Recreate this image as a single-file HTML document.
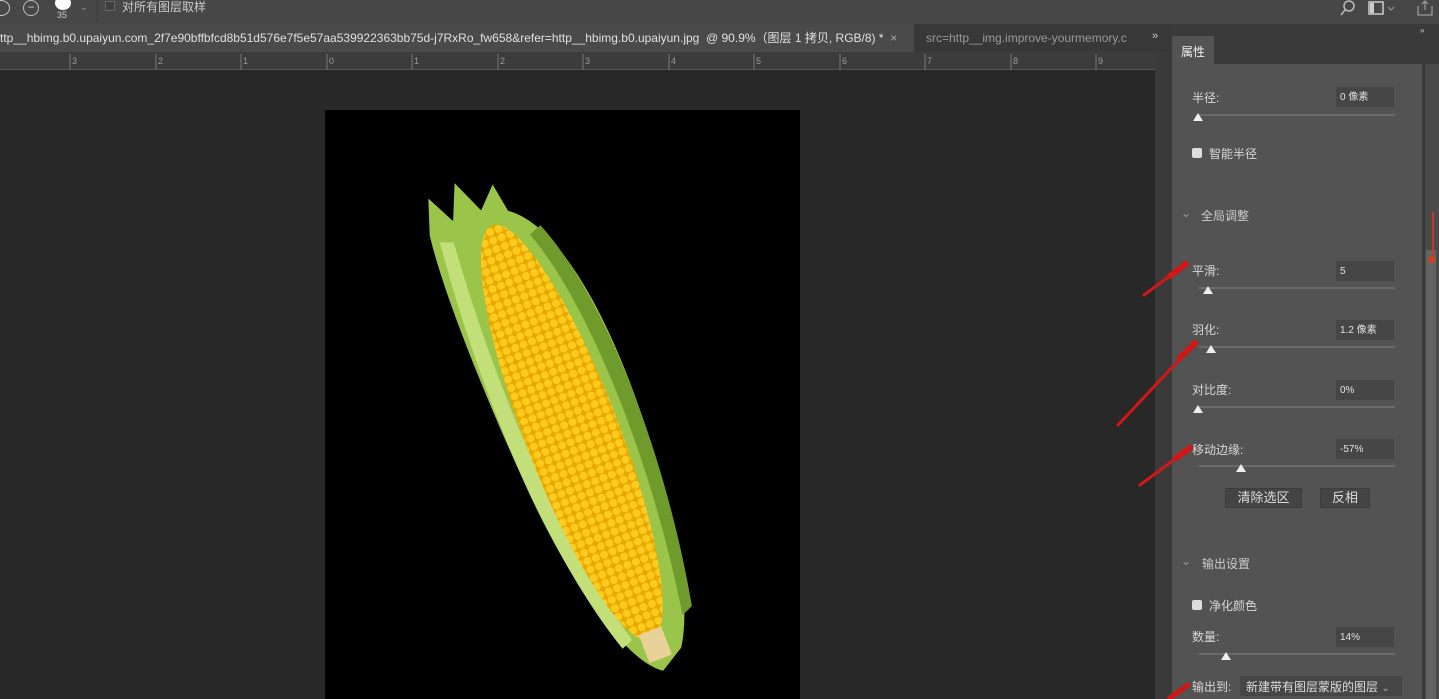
<!DOCTYPE html>
<html style="overflow:hidden;width:1439px;height:699px"><head><meta charset="utf-8"><style>
*{margin:0;padding:0;box-sizing:border-box}
body{width:1439px;height:699px;overflow:hidden;background:#282828;font-family:"Liberation Sans","Noto Sans CJK SC",sans-serif;color:#ddd;position:relative}
.abs{position:absolute}
.lbl{position:absolute;font-size:12px;color:#d8d8d8}
.inp{position:absolute;width:58px;height:20px;background:#464646;font-size:10px;color:#e0e0e0;padding:5px 4px;line-height:12px}
.trk{position:absolute;height:2px;background:#6a6a6a;width:196px}
.th{position:absolute;width:0;height:0;border-left:5px solid transparent;border-right:5px solid transparent;border-bottom:8px solid #eee}
.btn{position:absolute;height:20px;background:#444;border:1px solid #3c3c3c;font-size:13px;color:#ddd;text-align:center;line-height:18px}
.cb{position:absolute;width:10px;height:10px;background:#ddd;border-radius:2px}
.sec{position:absolute;font-size:12px;color:#ccc}
</style></head><body>
<div class="abs" style="left:0;top:0;width:1439px;height:24px;background:#474747"></div>
<div class="abs" style="left:-8px;top:0;width:18px;height:16px;border:1px solid #ccc;border-radius:50%"></div>
<div class="abs" style="left:23px;top:0;width:16px;height:16px;border:1px solid #bbb;border-radius:50%;font-size:12px;line-height:12px;text-align:center;color:#ccc">−</div>
<div class="abs" style="left:55px;top:-4px;width:16px;height:14px;background:#fff;border-radius:50%"></div>
<div class="abs" style="left:57px;top:10px;font-size:9px;color:#ccc">35</div>
<div class="abs" style="left:80px;top:2px;font-size:9px;color:#999">⌄</div>
<div class="abs" style="left:97px;top:0;width:1px;height:22px;background:#3a3a3a"></div>
<div class="abs" style="left:105px;top:1px;width:10px;height:10px;border:1px solid #666;background:#3e3e3e"></div>
<div class="abs" style="left:122px;top:-2px;font-size:12px;color:#ccc">对所有图层取样</div>
<svg class="abs" style="left:1338px;top:0" width="100" height="20"><circle cx="11" cy="6" r="5" fill="none" stroke="#bbb" stroke-width="1.5"/><line x1="7" y1="10" x2="3" y2="15" stroke="#bbb" stroke-width="1.5"/><rect x="31" y="2" width="14" height="12" fill="none" stroke="#ccc" stroke-width="1.5"/><rect x="32" y="3" width="4" height="10" fill="#ccc"/><path d="M50 7l3 3 3-3" fill="none" stroke="#999"/><path d="M80 6v9h14v-9M87 1v9M84 4l3-3 3 3" fill="none" stroke="#999" stroke-width="1.3"/></svg>
<div class="abs" style="left:0;top:24px;width:1170px;height:28px;background:#383838"></div>
<div class="abs" style="left:0;top:24px;width:914px;height:28px;background:#4a4a4a;font-size:12px;color:#e0e0e0;line-height:28px;white-space:nowrap;overflow:hidden">ttp__hbimg.b0.upaiyun.com_2f7e90bffbfcd8b51d576e7f5e57aa539922363bb75d-j7RxRo_fw658&amp;refer=http__hbimg.b0.upaiyun.jpg &nbsp;@ 90.9%（图层 1 拷贝, RGB/8) * &nbsp;<span style="color:#aaa">×</span></div>
<div class="abs" style="left:926px;top:24px;width:205px;height:28px;font-size:12px;color:#999;line-height:28px;white-space:nowrap;overflow:hidden">src=http__img.improve-yourmemory.c</div>
<div class="abs" style="left:1152px;top:30px;font-size:11px;color:#ccc">»</div>
<div class="abs" style="left:0;top:52px;width:1155px;height:18px;background:#3c3c3c;border-bottom:1px solid #555"></div>
<svg class="abs" style="left:0;top:52px" width="1155" height="18">
<g stroke="#777" stroke-width="1">
<line x1="70" y1="2" x2="70" y2="18"/><line x1="156" y1="2" x2="156" y2="18"/><line x1="241" y1="2" x2="241" y2="18"/><line x1="327" y1="2" x2="327" y2="18"/><line x1="412" y1="2" x2="412" y2="18"/><line x1="498" y1="2" x2="498" y2="18"/><line x1="583" y1="2" x2="583" y2="18"/><line x1="669" y1="2" x2="669" y2="18"/><line x1="754" y1="2" x2="754" y2="18"/><line x1="840" y1="2" x2="840" y2="18"/><line x1="925" y1="2" x2="925" y2="18"/><line x1="1011" y1="2" x2="1011" y2="18"/><line x1="1096" y1="2" x2="1096" y2="18"/>
</g>
<g fill="#999" font-size="9" font-family="Liberation Sans"><text x="72" y="12">3</text><text x="158" y="12">2</text><text x="243" y="12">1</text><text x="329" y="12">0</text><text x="414" y="12">1</text><text x="500" y="12">2</text><text x="585" y="12">3</text><text x="671" y="12">4</text><text x="756" y="12">5</text><text x="842" y="12">6</text><text x="927" y="12">7</text><text x="1013" y="12">8</text><text x="1098" y="12">9</text></g>
</svg>
<div class="abs" style="left:325px;top:110px;width:475px;height:589px;background:#000"></div>
<svg class="abs" style="left:325px;top:110px" width="475" height="589">
<defs><pattern id="k" width="9" height="9" patternUnits="userSpaceOnUse"><rect width="9" height="9" fill="#e8a800"/><circle cx="4.5" cy="4.5" r="4" fill="#ffcb1f"/></pattern></defs>
<g transform="translate(245,318) rotate(-21)">
<path d="M-62,-230 L-50,-265 L-35,-235 L-20,-270 L-5,-235 L15,-255 L20,-225 C55,-200 75,-120 72,0 C70,100 55,200 25,245 L0,260 C-30,240 -55,150 -62,40 C-68,-60 -70,-170 -62,-230Z" fill="#9bc44a"/>
<path d="M-55,-220 C-70,-80 -70,100 -30,225 L-18,220 C-55,80 -52,-100 -42,-215Z" fill="#c3df7a"/>
<path d="M45,-200 C80,-110 80,60 50,210 L38,215 C65,60 62,-110 32,-195Z" fill="#6f9a2c"/>
<ellipse cx="0" cy="5" rx="47" ry="222" fill="url(#k)"/>
<rect x="-10" y="218" width="24" height="30" fill="#e8d29a"/>
</g>
</svg>
<div class="abs" style="left:1155px;top:52px;width:15px;height:647px;background:#3a3a3a"></div>
<div class="abs" style="left:1170px;top:24px;width:269px;height:675px;background:#3a3a3a"></div>
<div class="abs" style="left:1420px;top:26px;font-size:8px;color:#ccc">»</div>
<div class="abs" style="left:1172px;top:36px;width:42px;height:28px;background:#535353;font-size:12px;color:#eee;padding:7px 0 0 9px">属性</div>
<div class="abs" style="left:1172px;top:64px;width:250px;height:635px;background:#535353"></div>
<div class="abs" style="left:1425px;top:64px;width:14px;height:635px;background:#4a4a4a"></div>
<div class="abs" style="left:1426px;top:250px;width:10px;height:449px;background:#636363"></div>
<div class="abs" style="left:1432px;top:212px;width:2px;height:50px;background:#c0392b"></div>
<div class="abs" style="left:1428px;top:256px;width:7px;height:7px;border-radius:50%;background:#d04020"></div>

<div class="lbl" style="left:1192px;top:89px">半径:</div><div class="inp" style="left:1336px;top:87px">0 像素</div>
<div class="trk" style="left:1199px;top:114px"></div><div class="th" style="left:1193px;top:113px"></div>
<div class="cb" style="left:1192px;top:148px"></div><div class="lbl" style="left:1209px;top:145px">智能半径</div>
<div class="sec" style="left:1181px;top:206px;color:#999">⌄</div><div class="sec" style="left:1201px;top:207px">全局调整</div>
<div class="lbl" style="left:1192px;top:262px">平滑:</div><div class="inp" style="left:1336px;top:261px">5</div>
<div class="trk" style="left:1199px;top:287px"></div><div class="th" style="left:1203px;top:286px"></div>
<div class="lbl" style="left:1192px;top:321px">羽化:</div><div class="inp" style="left:1336px;top:320px">1.2 像素</div>
<div class="trk" style="left:1199px;top:346px"></div><div class="th" style="left:1206px;top:345px"></div>
<div class="lbl" style="left:1192px;top:381px">对比度:</div><div class="inp" style="left:1336px;top:380px">0%</div>
<div class="trk" style="left:1199px;top:406px"></div><div class="th" style="left:1193px;top:405px"></div>
<div class="lbl" style="left:1192px;top:441px">移动边缘:</div><div class="inp" style="left:1336px;top:439px">-57%</div>
<div class="trk" style="left:1199px;top:465px"></div><div class="th" style="left:1236px;top:464px"></div>
<div class="btn" style="left:1225px;top:488px;width:77px">清除选区</div>
<div class="btn" style="left:1320px;top:488px;width:50px">反相</div>
<div class="sec" style="left:1181px;top:554px;color:#999">⌄</div><div class="sec" style="left:1202px;top:555px">输出设置</div>
<div class="cb" style="left:1192px;top:600px"></div><div class="lbl" style="left:1209px;top:597px">净化颜色</div>
<div class="lbl" style="left:1192px;top:628px">数量:</div><div class="inp" style="left:1336px;top:627px">14%</div>
<div class="trk" style="left:1199px;top:653px"></div><div class="th" style="left:1221px;top:652px"></div>
<div class="lbl" style="left:1192px;top:678px">输出到:</div>
<div class="abs" style="left:1240px;top:676px;width:162px;height:20px;background:#464646;font-size:12px;color:#ddd;padding:2px 6px;white-space:nowrap;overflow:hidden">新建带有图层蒙版的图层 <span style="color:#aaa;font-size:10px">⌄</span></div>
<svg class="abs" style="left:1100px;top:240px" width="120" height="459">
<g stroke="#d01818" stroke-linecap="round" fill="none">
<path d="M44 55 L86 24" stroke-width="3"/><path d="M70 36 L86 24" stroke-width="6"/>
<path d="M18 185 L95 103" stroke-width="3"/><path d="M80 118 L95 103" stroke-width="6"/>
<path d="M40 245 L90 208" stroke-width="3"/><path d="M76 218 L90 208" stroke-width="6"/>
<path d="M70 458 L88 445" stroke-width="5"/>
</g></svg>
</body></html>
